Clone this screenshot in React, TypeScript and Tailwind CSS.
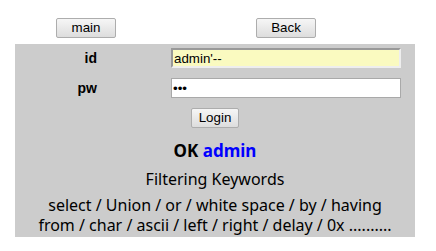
export default function App() {
  const btn =
    "h-[20px] border border-[#adadad] rounded-[2px] bg-gradient-to-b from-[#f6f6f6] to-[#dddddd] text-[13.33px] leading-none text-black";

  return (
    <div className="w-[436px] h-[251px] bg-white font-['Liberation_Sans',Arial,sans-serif]">
      <div className="flex pt-[18px] pl-[56px] gap-[140px]">
        <button className={`${btn} w-[60px]`}>main</button>
        <button className={`${btn} w-[60px]`}>Back</button>
      </div>

      <div className="ml-[15px] mt-[6px] w-[400px] h-[193px] bg-[#cccccc] pt-[4px]">
        <div className="flex items-center h-[20px]">
          <div className="w-[156px] pr-[74px] text-right text-[14px] font-bold">id</div>
          <input
            readOnly
            value="admin'--"
            className="w-[230px] h-[20px] bg-[#fafac0] border-2 border-t-[#999999] border-l-[#999999] border-r-[#eeeeee] border-b-[#eeeeee] px-[1px] text-[13.33px] outline-none"
          />
        </div>
        <div className="flex items-center h-[20px] mt-[10px]">
          <div className="w-[156px] pr-[74px] text-right text-[14px] font-bold">pw</div>
          <input
            readOnly
            type="password"
            value="abc"
            className="w-[230px] h-[20px] bg-white border border-[#a9a9a9] px-[1px] text-[13.33px] outline-none"
          />
        </div>
        <div className="flex justify-center mt-[10px]">
          <button className={`${btn} w-[48px]`}>Login</button>
        </div>

        <div className="text-center font-['Noto_Sans',sans-serif] text-black">
          <div className="mt-[12px] text-[17px] font-bold leading-[22px]">
            OK <span className="text-[#0000ff]">admin</span>
          </div>
          <div className="mt-[7px] text-[16px] leading-[20px]">Filtering Keywords</div>
          <div className="mt-[6px] text-[16px] leading-[20px]">
            select / Union / or / white space / by / having
          </div>
          <div className="text-[16px] leading-[20px]">
            from / char / ascii / left / right / delay / 0x ..........
          </div>
        </div>
      </div>
    </div>
  );
}
